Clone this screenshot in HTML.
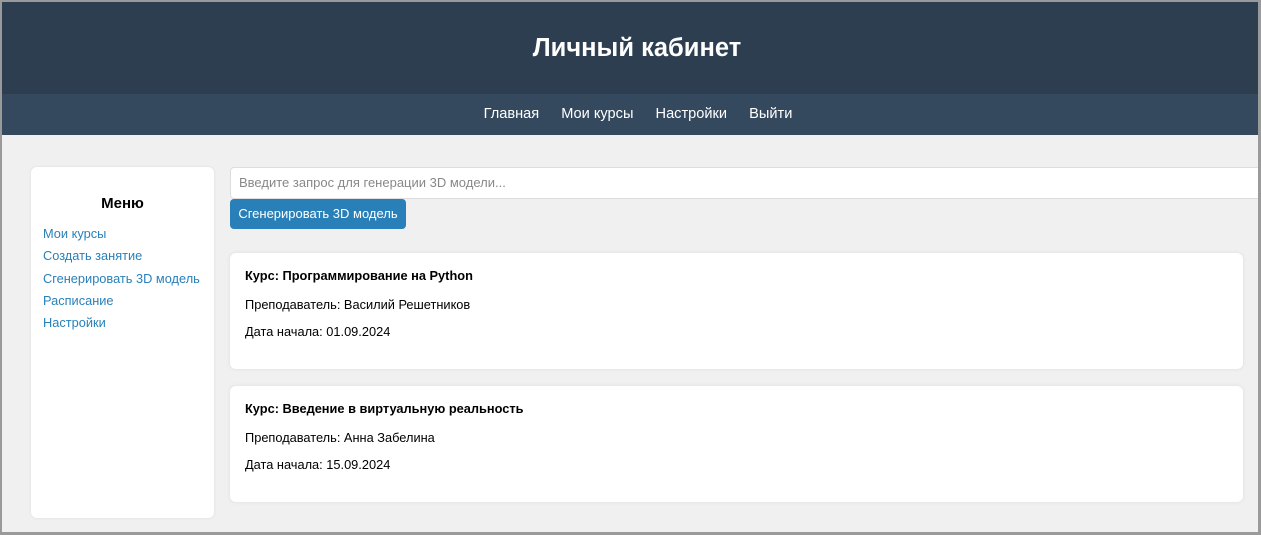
<!DOCTYPE html>
<html><head><meta charset="utf-8"><style>
*{box-sizing:border-box;margin:0;padding:0}
body{width:1261px;height:535px;overflow:hidden;background:#fff;font-family:"Liberation Sans",Arial,sans-serif;position:relative}
.frame{position:absolute;left:0;top:0;width:1261px;height:535px;border:2px solid #9a9a9a;border-right-width:3px;border-bottom-width:3px;background:#f0f0f0;overflow:hidden}
.hdr{position:absolute;left:0;top:0;width:100%;height:92px;background:#2c3e50;color:#fff;text-align:center;font-weight:bold;font-size:25.5px;line-height:92px;padding-left:14px}
.nav{position:absolute;left:0;top:92px;width:100%;height:41px;background:#34495e;color:#fff;font-size:14.6px;line-height:41px;text-align:center;padding-left:16px}
.nav span{margin:0 9px}
.side{position:absolute;left:29px;top:165px;width:183px;height:351px;background:#fff;border-radius:6px;box-shadow:0 0 3px rgba(0,0,0,.08)}
.side h3{font-size:15px;text-align:center;margin-top:28px;margin-bottom:11px}
.side a{display:block;color:#2980b9;font-size:12.8px;margin-left:12px;line-height:22.3px;text-decoration:none}
.inp{position:absolute;left:228px;top:165px;width:1040px;height:32px;background:#fff;border:1px solid #ddd;border-radius:4px;font-size:13px;color:#888;padding-left:8px;line-height:30px}
.btn{position:absolute;left:228px;top:197px;width:176px;height:30px;background:#2980b9;color:#fff;border-radius:4px;font-size:13px;line-height:30px;text-align:center}
.card{position:absolute;left:228px;width:1013px;height:116px;background:#fff;border-radius:6px;box-shadow:0 0 4px rgba(0,0,0,.08);font-size:12.8px;padding-left:15px}
.card b{display:block;margin-top:15px;margin-bottom:14px}
.card p{margin-bottom:12px}
</style></head><body><div class="frame">
<div class="hdr">Личный кабинет</div>
<div class="nav"><span>Главная</span> <span>Мои курсы</span> <span>Настройки</span> <span>Выйти</span></div>
<div class="side"><h3>Меню</h3><a>Мои курсы</a><a>Создать занятие</a><a>Сгенерировать 3D модель</a><a>Расписание</a><a>Настройки</a></div>
<div class="inp">Введите запрос для генерации 3D модели...</div>
<div class="btn">Сгенерировать 3D модель</div>
<div class="card" style="top:251px"><b>Курс: Программирование на Python</b><p>Преподаватель: Василий Решетников</p><p>Дата начала: 01.09.2024</p></div>
<div class="card" style="top:384px"><b>Курс: Введение в виртуальную реальность</b><p>Преподаватель: Анна Забелина</p><p>Дата начала: 15.09.2024</p></div>
</div></body></html>
